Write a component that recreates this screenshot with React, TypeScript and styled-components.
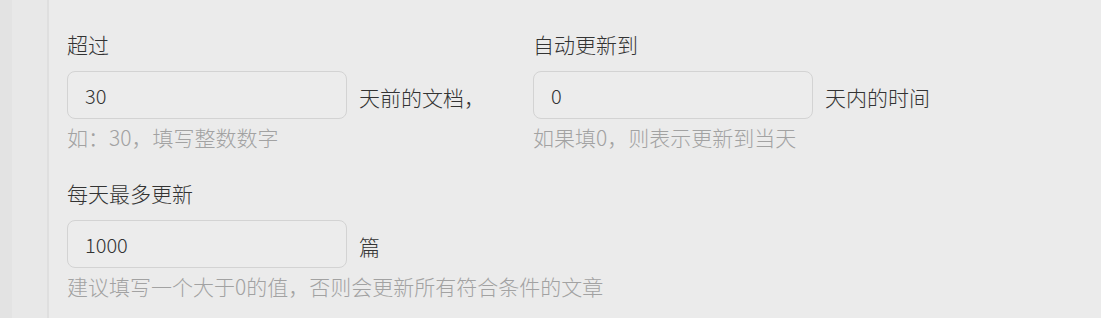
import styled, { createGlobalStyle } from "styled-components";

const GlobalStyle = createGlobalStyle`
  html, body {
    margin: 0;
    padding: 0;
    background: #ebebeb;
  }
  body {
    font-family: "Noto Sans CJK SC", "Noto Sans", sans-serif;
    font-weight: 300;
  }
`;

const Page = styled.div`
  display: flex;
  height: 318px;
  background: #ebebeb;
  overflow: hidden;
`;

const Rail = styled.div`
  width: 12px;
  background: #e3e3e3;
`;

const Gutter = styled.div`
  width: 35px;
  background: #e8e8e8;
  border-right: 2px solid #dfdfdf;
`;

const Main = styled.div`
  flex: 1;
  padding: 29px 18px 0 18px;
  display: flex;
  flex-direction: column;
  gap: 26px;
`;

const Row = styled.div`
  display: grid;
  grid-template-columns: 466px 466px;
`;

const Field = styled.div`
  display: flex;
  flex-direction: column;
`;

const Label = styled.div`
  font-size: 21px;
  line-height: 30px;
  color: #333;
`;

const Control = styled.div`
  display: flex;
  align-items: center;
  gap: 12px;
  margin-top: 12px;
`;

const Input = styled.input`
  box-sizing: border-box;
  width: 280px;
  height: 48px;
  padding: 0 17px;
  border: 1px solid #d3d3d3;
  border-radius: 8px;
  background: #ececec;
  font-family: inherit;
  font-weight: 300;
  font-size: 20px;
  color: #333;
  outline: none;
`;

const Suffix = styled.span`
  font-size: 21px;
  line-height: 30px;
  color: #333;
  padding-top: 4px;
`;

const Hint = styled.div`
  margin-top: 3px;
  font-size: 21px;
  line-height: 30px;
  color: #a2a2a2;
  white-space: nowrap;
`;

type FieldProps = {
  label: string;
  value: string;
  suffix: string;
  hint: string;
};

const FormField = ({ label, value, suffix, hint }: FieldProps) => (
  <Field>
    <Label>{label}</Label>
    <Control>
      <Input defaultValue={value} />
      <Suffix>{suffix}</Suffix>
    </Control>
    <Hint>{hint}</Hint>
  </Field>
);

export default function App() {
  return (
    <>
      <GlobalStyle />
      <Page>
        <Rail />
        <Gutter />
        <Main>
          <Row>
            <FormField
              label="超过"
              value="30"
              suffix="天前的文档，"
              hint="如：30，填写整数数字"
            />
            <FormField
              label="自动更新到"
              value="0"
              suffix="天内的时间"
              hint="如果填0，则表示更新到当天"
            />
          </Row>
          <Row>
            <FormField
              label="每天最多更新"
              value="1000"
              suffix="篇"
              hint="建议填写一个大于0的值，否则会更新所有符合条件的文章"
            />
          </Row>
        </Main>
      </Page>
    </>
  );
}
